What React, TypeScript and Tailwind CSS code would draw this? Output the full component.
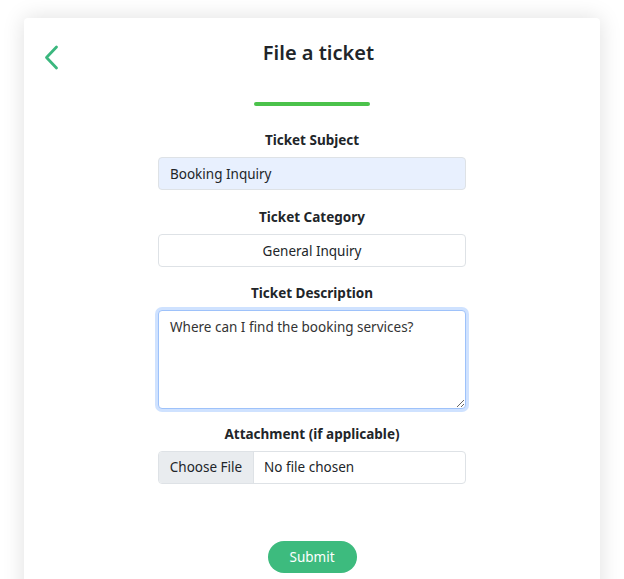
const font = { fontFamily: '"Noto Sans", "Open Sans", sans-serif' };

function Label({ children }: { children: React.ReactNode }) {
  return (
    <label className="mb-[6px] block text-center text-[13.5px] font-bold leading-[22px] text-[#212529]">
      {children}
    </label>
  );
}

export default function App() {
  return (
    <div className="min-h-[579px] bg-white px-6 pt-[18px]" style={font}>
      <div className="relative min-h-[600px] rounded-sm bg-white pt-[21px] shadow-[0_0_22px_rgba(0,0,0,0.13)]">
        <button className="absolute left-[20px] top-[27px] text-[#3bb77e]" aria-label="Back">
          <svg width="15" height="25" viewBox="0 0 15 25" fill="none">
            <polyline
              points="12.5,2 2.5,12.5 12.5,23"
              stroke="currentColor"
              strokeWidth="2.8"
              strokeLinecap="round"
              strokeLinejoin="round"
            />
          </svg>
        </button>
        <h1 className="pl-[13px] text-center text-[20px] font-semibold leading-[28px] text-[#212529]">
          File a ticket
        </h1>

        <div className="mx-auto mt-[35px] h-[4px] w-[116px] rounded-full bg-[#4bc24b]" />

        <form className="mx-auto mt-[23px] flex w-[308px] flex-col">
          <Label>Ticket Subject</Label>
          <input
            defaultValue="Booking Inquiry"
            className="h-[33px] rounded border border-[#dee2e6] bg-[#e8f0fe] px-[11px] text-[13.5px] text-[#212529] outline-none"
          />

          <div className="mt-[16px]">
            <Label>Ticket Category</Label>
          </div>
          <input
            defaultValue="General Inquiry"
            className="h-[33px] rounded border border-[#dee2e6] bg-white px-[11px] text-center text-[13.5px] text-[#212529] outline-none"
          />

          <div className="mt-[15px]">
            <Label>Ticket Description</Label>
          </div>
          <textarea
            defaultValue="Where can I find the booking services?"
            className="h-[99px] resize-y rounded border border-[#9ec2fa] bg-white px-[11px] py-[6px] text-[13.5px] text-[#333] shadow-[0_0_0_3px_rgba(13,110,253,0.2)] outline-none"
          />

          <div className="mt-[14px]">
            <Label>Attachment (if applicable)</Label>
          </div>
          <div className="flex h-[33px] overflow-hidden rounded border border-[#dee2e6] text-[13.5px] text-[#212529]">
            <span className="flex w-[95px] items-center justify-center border-r border-[#dee2e6] bg-[#e9ecef]">
              Choose File
            </span>
            <span className="flex items-center pl-[10px]">No file chosen</span>
          </div>

          <div className="mt-[57px] flex justify-center">
            <button
              type="button"
              className="h-[32px] w-[89px] rounded-full bg-[#3dbb7e] text-[13.5px] text-white"
            >
              Submit
            </button>
          </div>
        </form>
      </div>
    </div>
  );
}
